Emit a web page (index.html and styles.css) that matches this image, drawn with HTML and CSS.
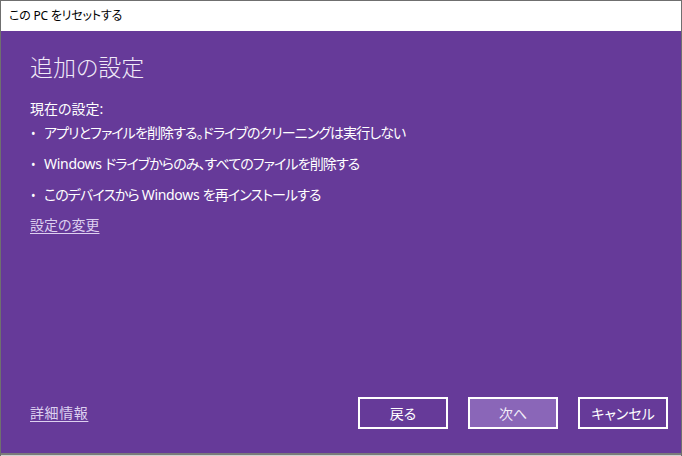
FILE: index.html
```html
<!DOCTYPE html>
<html lang="ja">
<head>
<meta charset="utf-8">
<link rel="stylesheet" href="styles.css">
</head>
<body>
<div class="window">
  <div class="titlebar">この PC をリセットする</div>
  <div class="main">
    <h1 class="heading">追加の設定</h1>
    <p class="label">現在の設定:</p>
    <ul class="list">
      <li>アプリとファイルを削除する。ドライブのクリーニングは実行しない</li>
      <li><span class="latin">Windows </span>ドライブからのみ、すべてのファイルを削除する</li>
      <li>このデバイスから <span class="latin">Windows </span>を再インストールする</li>
    </ul>
    <a class="link change" href="#">設定の変更</a>
    <div class="spacer"></div>
    <div class="footer">
      <a class="link" href="#">詳細情報</a>
      <div class="buttons">
        <button class="btn">戻る</button>
        <button class="btn primary">次へ</button>
        <button class="btn">キャンセル</button>
      </div>
    </div>
  </div>
  <div class="bottom"></div>
</div>
</body>
</html>
```
FILE: styles.css
```css
html, body {
  margin: 0;
  padding: 0;
  background: #ffffff;
}
body {
  width: 682px;
  height: 456px;
  overflow: hidden;
  font-family: "Noto Sans", "Noto Sans CJK JP", sans-serif;
  font-feature-settings: "palt";
}
.window {
  width: 682px;
  height: 456px;
  box-sizing: border-box;
  border: 1px solid #6f6f6f;
  border-bottom: none;
  display: flex;
  flex-direction: column;
}
.titlebar {
  height: 30px;
  flex: none;
  background: #ffffff;
  color: #000000;
  font-size: 12px;
  line-height: 30px;
  padding-left: 8px;
  letter-spacing: -0.2px;
}
.main {
  flex: 1;
  background: #663a99;
  color: #ffffff;
  display: flex;
  flex-direction: column;
  padding: 20px 13px 0 29px;
}
.heading {
  margin: 0;
  font-size: 23px;
  font-weight: 300;
  line-height: 32px;
  color: #f0eaf8;
}
.label {
  margin: 15px 0 0;
  font-size: 14px;
  line-height: 22px;
}
.list {
  list-style: none;
  margin: 2px 0 0;
  padding: 0;
}
.list li {
  font-size: 14px;
  line-height: 22px;
  margin-bottom: 8px;
  display: block;
  letter-spacing: -0.9px;
}
.list li::before {
  content: "•";
  display: inline-block;
  width: 13px;
  padding-left: 1px;
  font-size: 12px;
  letter-spacing: 0;
}
.list .latin {
  letter-spacing: -0.3px;
  white-space: pre;
}
.link {
  color: #ddd0f0;
  font-size: 14px;
  line-height: 22px;
  text-decoration: underline;
  text-underline-offset: 3px;
}
.change {
  align-self: flex-start;
  margin-top: -1px;
}
.spacer {
  flex: 1;
}
.footer {
  display: flex;
  align-items: center;
  justify-content: space-between;
  height: 32px;
  margin-bottom: 24px;
}
.footer .link {
  letter-spacing: 0.6px;
}
.buttons {
  display: flex;
  gap: 20px;
}
.btn {
  width: 90px;
  height: 32px;
  box-sizing: border-box;
  border: 2px solid #ffffff;
  background: transparent;
  color: #ffffff;
  font-family: "Noto Sans", "Noto Sans CJK JP", sans-serif;
  font-feature-settings: "palt";
  font-size: 14px;
  padding: 0;
}
.btn.primary {
  background: #8a66b8;
  color: #f3eefa;
}
.bottom {
  height: 2px;
  flex: none;
  background: #7a7a7a;
  border-bottom: 1px solid #d0d0d0;
}
```
